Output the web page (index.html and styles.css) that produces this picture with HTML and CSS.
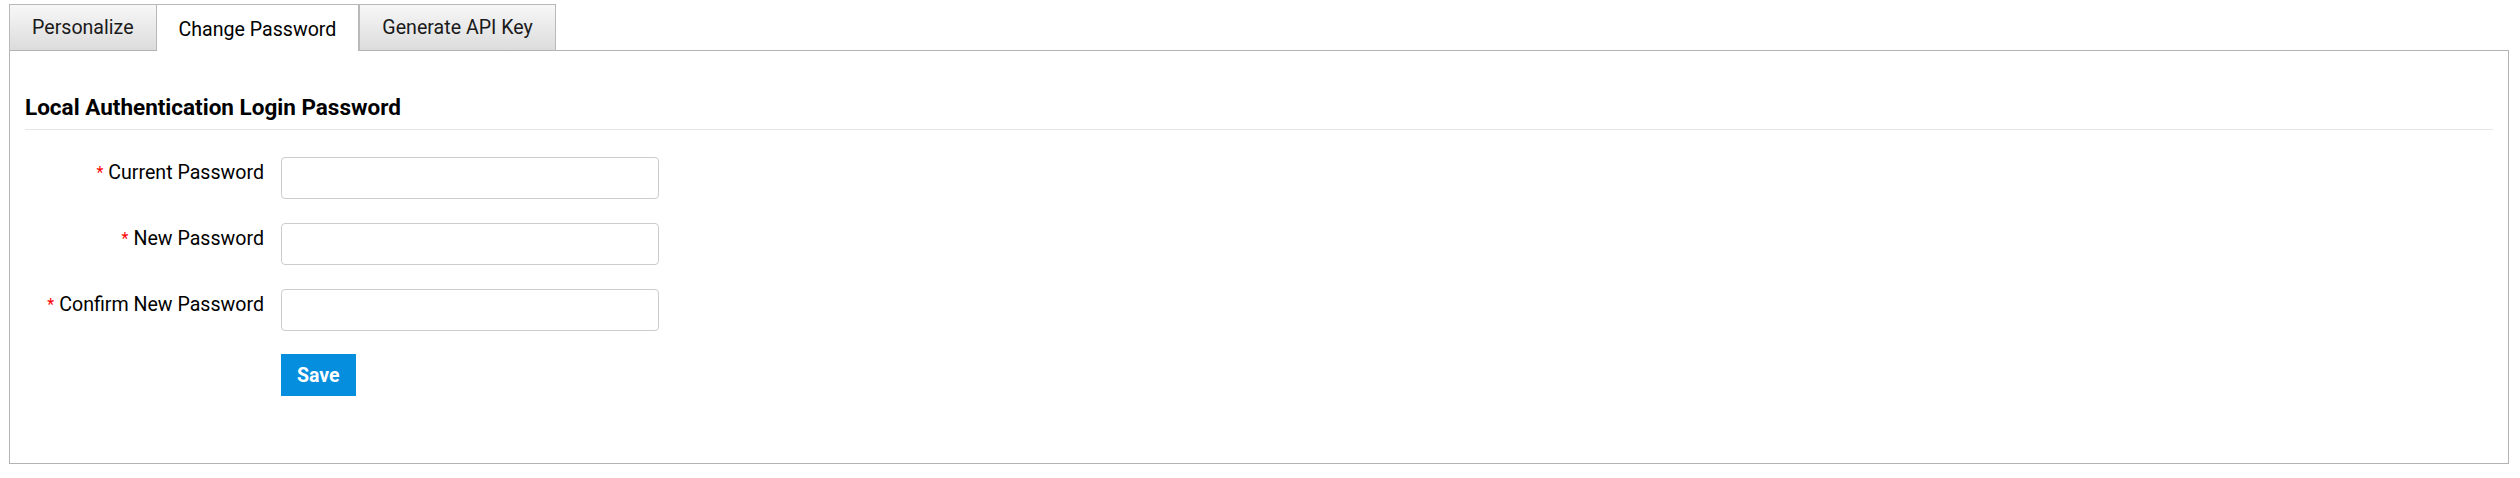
FILE: index.html
```html
<!DOCTYPE html>
<html lang="en">
<head>
<meta charset="utf-8">
<title>Change Password</title>
<link rel="stylesheet" href="styles.css">
</head>
<body>
<div class="page">
  <ul class="tabs">
    <li class="tab">Personalize</li>
    <li class="tab active">Change Password</li>
    <li class="tab">Generate API Key</li>
  </ul>
  <div class="panel">
    <h2 class="section-title">Local Authentication Login Password</h2>
    <form class="form">
      <label class="label" for="cur"><span class="req">*</span>Current Password</label>
      <input class="field" id="cur" type="password">
      <label class="label" for="new"><span class="req">*</span>New Password</label>
      <input class="field" id="new" type="password">
      <label class="label" for="conf"><span class="req">*</span>Confirm New Password</label>
      <input class="field" id="conf" type="password">
      <span class="spacer"></span>
      <div class="actions"><button class="btn" type="button">Save</button></div>
    </form>
  </div>
</div>
</body>
</html>
```

FILE: styles.css
```css
html, body {
  margin: 0;
  padding: 0;
  background: #fff;
}
body {
  font-family: Roboto, "Liberation Sans", sans-serif;
  color: #000;
}
.page {
  padding: 4px 11px 0 9px;
}
.tabs {
  display: flex;
  align-items: flex-start;
  list-style: none;
  margin: 0;
  padding: 0;
  position: relative;
  z-index: 1;
}
.tab {
  box-sizing: border-box;
  height: 46px;
  padding: 11px 22px 0;
  font-size: 19.6px;
  line-height: 24px;
  color: #1a1a1a;
  border: 1px solid #b9b9b9;
  border-bottom: none;
  background: linear-gradient(#f7f7f7, #dcdcdc);
  white-space: nowrap;
}
.tab + .tab {
  border-left: none;
}
.tab.active {
  height: 47px;
  margin-bottom: -1px;
  padding-top: 13px;
  background: #fff;
  color: #000;
}
.tab.active + .tab {
  border-left: 1px solid #b9b9b9;
}
.panel {
  border: 1px solid #b3b3b3;
  padding: 43px 15px 67px;
}
.section-title {
  margin: 0;
  font-size: 22.5px;
  line-height: 26px;
  font-weight: 700;
  padding-bottom: 9px;
  border-bottom: 1px solid #e6e6e6;
}
.form {
  display: grid;
  grid-template-columns: 239px 378px;
  column-gap: 17px;
  row-gap: 24px;
  margin-top: 27px;
}
.label {
  text-align: right;
  font-size: 19.6px;
  line-height: 24px;
  padding-top: 4px;
  white-space: nowrap;
}
.req {
  color: #f00;
  font-size: 16px;
  margin-right: 5px;
  vertical-align: 1px;
}
.field {
  box-sizing: border-box;
  height: 42px;
  width: 378px;
  margin: 0;
  border: 1px solid #cccccc;
  border-radius: 4px;
  background: #fff;
  font-size: 18px;
  padding: 0 10px;
}
.actions {
  margin-top: -1px;
}
.btn {
  height: 42px;
  padding: 0 16px;
  border: none;
  border-radius: 0;
  background: #058ede;
  color: #fff;
  font-family: Roboto, "Liberation Sans", sans-serif;
  font-size: 19.5px;
  font-weight: 700;
  cursor: pointer;
}
```
